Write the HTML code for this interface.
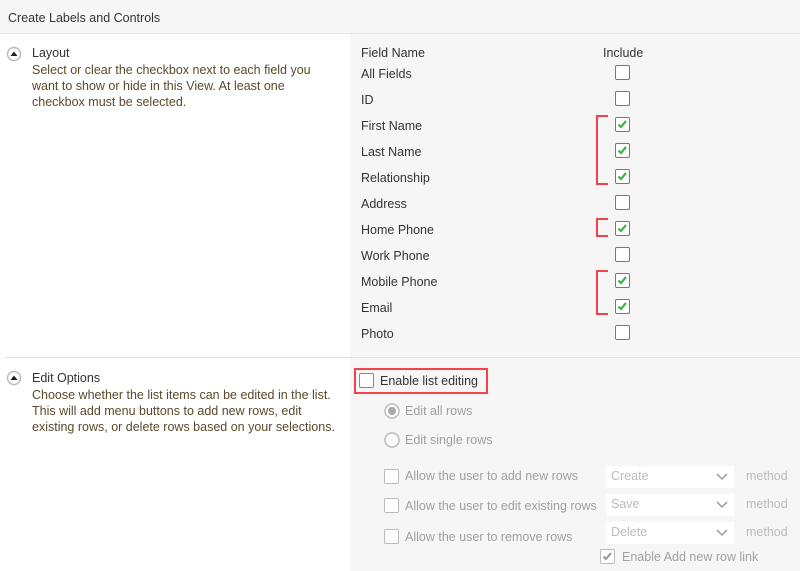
<!DOCTYPE html>
<html><head><meta charset="utf-8"><style>
*{margin:0;padding:0;box-sizing:border-box}
body{width:800px;height:571px;overflow:hidden;background:#fff;font-family:"Liberation Sans",sans-serif;font-size:12.5px;color:#333;position:relative}
.a{position:absolute;white-space:nowrap}
.hdr{position:absolute;left:0;top:0;width:800px;height:34px;background:#f7f7f7;border-bottom:1px solid #e3e3e3}
.right{position:absolute;left:350px;top:34px;width:450px;height:537px;background:#f6f6f6}
.cb{position:absolute;width:15px;height:15px;border:1.5px solid #777;border-radius:2px;background:#fff}
.cb.g{border-color:#bbb}
.desc{color:#5a4a2a;line-height:16px}
.br{position:absolute;border:2.5px solid #f2424a;border-right:none;width:12px}
.gr{color:#a0a0a0}
.sel{position:absolute;width:128px;height:22px;background:#fff;color:#bbb;padding:3px 5px}
.sel svg{position:absolute;right:6px;top:7px}
</style></head><body>
<div class="hdr"><span class="a" style="left:8px;top:11px;color:#333">Create Labels and Controls</span></div>
<div class="right"></div>
<div class="a" style="left:5px;top:357px;width:795px;height:1px;background:#e2e2e2"></div>

<svg class="a" style="left:6px;top:46px" width="16" height="16"><circle cx="8" cy="8" r="6.5" fill="#fff" stroke="#bbb" stroke-width="1.5"/><path d="M4.5 10 L8 5.5 L11.5 10Z" fill="#222"/></svg>
<div class="a" style="left:32px;top:46px">Layout</div>
<div class="a desc" style="left:32px;top:62px;white-space:normal;width:300px">Select or clear the checkbox next to each field you want to show or hide in this View. At least one checkbox must be selected.</div>

<svg class="a" style="left:6px;top:370px" width="16" height="16"><circle cx="8" cy="8" r="6.5" fill="#fff" stroke="#bbb" stroke-width="1.5"/><path d="M4.5 10 L8 5.5 L11.5 10Z" fill="#222"/></svg>
<div class="a" style="left:32px;top:371px">Edit Options</div>
<div class="a desc" style="left:32px;top:387px;white-space:normal;width:305px">Choose whether the list items can be edited in the list. This will add menu buttons to add new rows, edit existing rows, or delete rows based on your selections.</div>

<div class="a" style="left:361px;top:46px">Field Name</div>
<div class="a" style="left:603px;top:46px">Include</div>

<div class="a" style="left:361px;top:67px">All Fields</div>
<div class="a" style="left:361px;top:93px">ID</div>
<div class="a" style="left:361px;top:119px">First Name</div>
<div class="a" style="left:361px;top:145px">Last Name</div>
<div class="a" style="left:361px;top:171px">Relationship</div>
<div class="a" style="left:361px;top:197px">Address</div>
<div class="a" style="left:361px;top:223px">Home Phone</div>
<div class="a" style="left:361px;top:249px">Work Phone</div>
<div class="a" style="left:361px;top:275px">Mobile Phone</div>
<div class="a" style="left:361px;top:301px">Email</div>
<div class="a" style="left:361px;top:327px">Photo</div>

<div class="cb" style="left:615px;top:65px"></div>
<div class="cb" style="left:615px;top:91px"></div>
<div class="cb" style="left:615px;top:117px"><svg width="12" height="12" style="position:absolute;left:0;top:0"><path d="M2.5 6.5 L5 9 L10 3" fill="none" stroke="#3bb54a" stroke-width="2.2"/></svg></div>
<div class="cb" style="left:615px;top:143px"><svg width="12" height="12" style="position:absolute;left:0;top:0"><path d="M2.5 6.5 L5 9 L10 3" fill="none" stroke="#3bb54a" stroke-width="2.2"/></svg></div>
<div class="cb" style="left:615px;top:169px"><svg width="12" height="12" style="position:absolute;left:0;top:0"><path d="M2.5 6.5 L5 9 L10 3" fill="none" stroke="#3bb54a" stroke-width="2.2"/></svg></div>
<div class="cb" style="left:615px;top:195px"></div>
<div class="cb" style="left:615px;top:221px"><svg width="12" height="12" style="position:absolute;left:0;top:0"><path d="M2.5 6.5 L5 9 L10 3" fill="none" stroke="#3bb54a" stroke-width="2.2"/></svg></div>
<div class="cb" style="left:615px;top:247px"></div>
<div class="cb" style="left:615px;top:273px"><svg width="12" height="12" style="position:absolute;left:0;top:0"><path d="M2.5 6.5 L5 9 L10 3" fill="none" stroke="#3bb54a" stroke-width="2.2"/></svg></div>
<div class="cb" style="left:615px;top:299px"><svg width="12" height="12" style="position:absolute;left:0;top:0"><path d="M2.5 6.5 L5 9 L10 3" fill="none" stroke="#3bb54a" stroke-width="2.2"/></svg></div>
<div class="cb" style="left:615px;top:325px"></div>

<div class="br" style="left:596px;top:115px;height:70px"></div>
<div class="br" style="left:596px;top:218px;height:19px"></div>
<div class="br" style="left:596px;top:270px;height:45px"></div>

<div class="a" style="left:354px;top:368px;width:134px;height:26px;border:2.5px solid #f2424a"></div>
<div class="cb" style="left:359px;top:373px;border-color:#888"></div>
<div class="a" style="left:380px;top:374px;color:#333">Enable list editing</div>

<svg class="a" style="left:384px;top:403px" width="16" height="16"><circle cx="8" cy="8" r="7" fill="#fff" stroke="#bbb" stroke-width="1.5"/><circle cx="8" cy="8" r="4" fill="#aaa"/></svg>
<div class="a gr" style="left:405px;top:404px">Edit all rows</div>
<svg class="a" style="left:384px;top:432px" width="16" height="16"><circle cx="8" cy="8" r="7" fill="#fff" stroke="#bbb" stroke-width="1.5"/></svg>
<div class="a gr" style="left:405px;top:433px">Edit single rows</div>

<div class="cb g" style="left:384px;top:469px"></div>
<div class="a gr" style="left:405px;top:469px">Allow the user to add new rows</div>
<div class="cb g" style="left:384px;top:498px"></div>
<div class="a gr" style="left:405px;top:499px">Allow the user to edit existing rows</div>
<div class="cb g" style="left:384px;top:529px"></div>
<div class="a gr" style="left:405px;top:530px">Allow the user to remove rows</div>

<div class="sel" style="left:606px;top:466px">Create<svg width="12" height="8"><path d="M1 1 L6 6 L11 1" fill="none" stroke="#999" stroke-width="1.5"/></svg></div>
<div class="sel" style="left:606px;top:494px">Save<svg width="12" height="8"><path d="M1 1 L6 6 L11 1" fill="none" stroke="#999" stroke-width="1.5"/></svg></div>
<div class="sel" style="left:606px;top:522px">Delete<svg width="12" height="8"><path d="M1 1 L6 6 L11 1" fill="none" stroke="#999" stroke-width="1.5"/></svg></div>
<div class="a" style="left:746px;top:469px;color:#bbb">method</div>
<div class="a" style="left:746px;top:497px;color:#bbb">method</div>
<div class="a" style="left:746px;top:525px;color:#bbb">method</div>

<div class="cb g" style="left:600px;top:549px"><svg width="12" height="12" style="position:absolute;left:0;top:0"><path d="M2.5 6.5 L5 9 L10 3" fill="none" stroke="#999" stroke-width="2"/></svg></div>
<div class="a gr" style="left:622px;top:550px">Enable Add new row link</div>
</body></html>
